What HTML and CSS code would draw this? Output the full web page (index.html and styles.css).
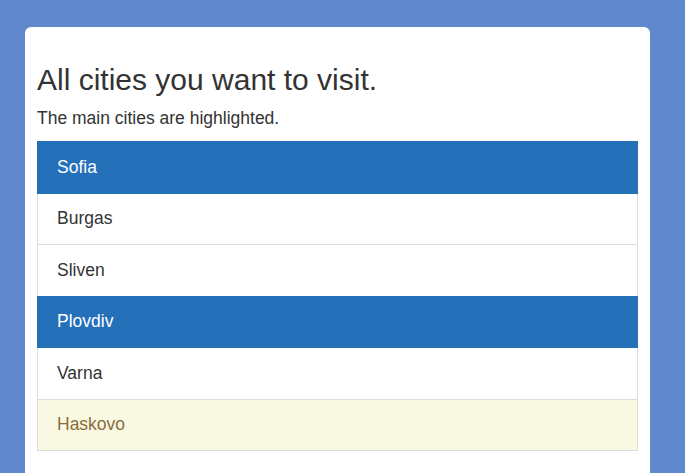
FILE: index.html
```html
<!DOCTYPE html>
<html lang="en">
<head>
<meta charset="utf-8">
<title>Cities</title>
<link rel="stylesheet" href="styles.css">
</head>
<body>
<main class="card">
  <h1 class="title">All cities you want to visit.</h1>
  <p class="subtitle">The main cities are highlighted.</p>
  <ul class="list">
    <li class="item item-active">Sofia</li>
    <li class="item">Burgas</li>
    <li class="item">Sliven</li>
    <li class="item item-active">Plovdiv</li>
    <li class="item">Varna</li>
    <li class="item item-warning">Haskovo</li>
  </ul>
</main>
</body>
</html>
```

FILE: styles.css
```css
html, body {
  margin: 0;
  height: 100%;
}
body {
  background: #6089cd;
  font-family: "Liberation Sans", Arial, sans-serif;
  color: #333333;
  padding: 27px 35px 0 25px;
  box-sizing: border-box;
  overflow: hidden;
}
.card {
  background: #ffffff;
  border-radius: 6px 6px 0 0;
  padding: 16px 12px 20px 12px;
  min-height: 500px;
  box-sizing: border-box;
  width: 625px;
}
.title {
  font-size: 30px;
  font-weight: normal;
  line-height: 33px;
  margin: 20px 0 10px 0;
}
.subtitle {
  font-size: 17.5px;
  line-height: 25px;
  margin: 0 0 10px 0;
}
.list {
  list-style: none;
  margin: 0;
  padding: 0;
}
.item {
  font-size: 17.5px;
  line-height: 25px;
  padding: 12.75px 19px;
  border: 1px solid #dddddd;
  margin-bottom: -1px;
  background: #ffffff;
}
.item-active {
  background: #2470b9;
  border-color: #2470b9;
  color: #ffffff;
  position: relative;
}
.item-warning {
  background: #f9f9e3;
  color: #8a6d3b;
}
```
